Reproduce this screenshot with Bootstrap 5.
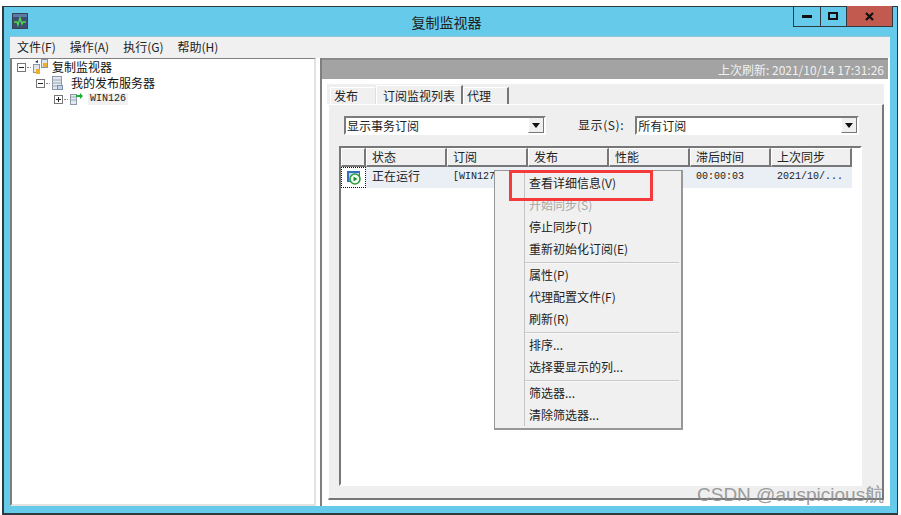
<!DOCTYPE html>
<html lang="zh">
<head>
<meta charset="utf-8">
<title>复制监视器</title>
<link href="https://cdn.jsdelivr.net/npm/bootstrap@5.3.0/dist/css/bootstrap.min.css" rel="stylesheet">
<style>
html,body{margin:0;width:901px;height:515px;overflow:hidden;background:#fff}
body{font-family:"Noto Sans CJK SC","Liberation Sans",sans-serif;font-size:12px;line-height:1;color:#111;padding:6px 0 0 2px}
.rm-win{position:relative;width:896px;height:509px;background:#66cbea;border:1px solid #2f3a40;border-bottom-width:2px;border-left-width:2px}
.rm-title{height:29px;position:relative}
.rm-title-txt{font-size:14px;color:#222;width:100%;text-align:center;padding-top:8px;padding-right:8px}
.rm-appicon{position:absolute;left:8px;top:6px}
.rm-caps{position:absolute;top:-1px;right:4px;height:21px;border:1px solid #2f3a40;border-top:0}
.rm-cap{height:20px;width:27px;border-right:1px solid #2f3a40}
.rm-cap-m{width:26px}
.rm-cap-x{width:45px;background:#c35a50;border-right:0}
.rm-client{width:880px;height:470px;margin-left:6px;border-top:1px solid #98c4d6;background:#fff}
.rm-menu{height:21px;background:#f0f0f0;padding:4px 0 0 7px;gap:14px;font-size:12px;color:#222}
.rm-panes{height:448px}
.rm-tree{width:306px;flex:none;border:1px solid #7f7f7f;border-right-color:#e3e3e3;border-bottom-color:#e3e3e3;border-right-width:2px;border-bottom-width:2px;padding:0 0 0 5px;border-left-width:2px;background:#fff}
.rm-treerow{height:16px;white-space:nowrap;font-size:12px}
.rm-ind1{padding-left:19px}
.rm-ind2{padding-left:37px}
.rm-box{width:9px;height:9px;border:1px solid #777;position:relative;flex:none;background:#fff}
.rm-box::before{content:"";position:absolute;left:1px;right:1px;top:3px;height:1px;background:#222}
.rm-box.rm-plus::after{content:"";position:absolute;top:1px;bottom:1px;left:3px;width:1px;background:#222}
.rm-dots{width:4px;border-top:1px dotted #888;flex:none;margin:0 1px}
.rm-ico{flex:none}
.rm-t-a{margin-left:4px}
.rm-t-b{margin-left:7px}
.rm-mono{font-family:"Liberation Mono","DejaVu Sans Mono",monospace;font-size:10px;color:#222}
.rm-sel{background:#f0f0f0;padding:1px 2px;margin-left:5px}
.rm-split{width:4px;flex:none;background:#fff}
.rm-right{width:570px;flex:none;border-left:2px solid #7f7f7f;background:#fff}
.rm-bar{height:21px;background:#a3a3a3;border-top:2px solid #8a8a8a;color:#f1f1f1;text-align:right;padding:4px 4px 0 0;font-size:12px;margin-right:2px}
.rm-tabs{height:20px;background:#efefef;padding:3px 0 0 3px;margin:5px 0 0 5px;width:557px}
.rm-tab{height:17px;background:#f0f0f0;border-left:1px solid #fff;border-top:1px solid #fff;border-right:2px solid #777;padding:2px 0 0 3px;font-size:12px;color:#222}
.rm-t1{width:46px;border-right:1px solid #ddd}
.rm-t2{width:87px;height:19px;margin-top:-2px;padding:4px 0 0 6px}
.rm-t3{width:46px}
.rm-body{height:396px;background:#efefef;border-top:1px solid #fff;border-left:1px solid #fff;border-right:2px solid #777;border-bottom:2px solid #777;padding:11px 0 0 15px;margin-left:6px;width:556px}
.rm-combos{height:30px}
.rm-combo{height:19px;background:#fff;border:2px solid #7b7b7b;border-right-color:#fff;border-bottom-color:#fff;padding:2px 0 0 1px;position:relative;font-size:12px;color:#222}
.rm-c1{width:202px}
.rm-c2{width:224px;margin-left:11px}
.rm-lbl{margin-left:32px;font-size:12px;letter-spacing:.6px;color:#222;padding-top:3px}
.rm-drop{position:absolute;right:0;top:0;width:16px;height:15px;background:#f0f0f0;border-right:1px solid #777;border-bottom:1px solid #777;border-left:1px solid #fff;display:flex;align-items:center;justify-content:center}
.rm-drop::after{content:"";border-left:4px solid transparent;border-right:4px solid transparent;border-top:5px solid #111}
.rm-list{width:523px;height:340px;background:#fff;border:2px solid #777;border-right-color:#fff;border-bottom-color:#fff;margin-left:-5px;padding:0}
.rm-head{height:19px}
.rm-hc{height:19px;background:#f0f0f0;border:1px solid #fff;border-right:2px solid #777;border-bottom:2px solid #777;width:81px;padding:2px 0 0 5px;font-size:12px;color:#222;flex:none}
.rm-h0{width:25px}
.rm-row{height:21px;width:511px;background:#e9eff4}
.rm-rc{width:81px;flex:none;padding:3px 0 0 6px;font-size:12px;color:#222;white-space:nowrap;overflow:hidden}
.rm-r0{width:25px;background:#fff;padding:0;display:flex;align-items:center;justify-content:center;outline:1px dotted #111;outline-offset:-1px}
.rm-num{font-family:"Liberation Mono",monospace;font-size:10px;color:#222;padding-top:5px}
.rm-ctx{position:absolute;left:490px;top:163px;width:189px;height:260px;background:#f0f0f0;border:2px solid #979797;border-width:1px 2px 2px 1px;padding-top:2px;font-size:12px;color:#222}
.rm-ctx::before{content:"";position:absolute;left:29px;top:2px;bottom:2px;width:1px;background:#c4c4c4}
.rm-mi{height:22px;padding:4px 0 0 34px;white-space:nowrap}
.rm-dis{color:#a6a6a6}
.rm-sp{height:4px;padding-top:1px;margin-left:30px;margin-right:2px}
.rm-sp::after{content:"";display:block;height:2px;background:#c9c9c9;border-bottom:1px solid #f8f8f8}
.rm-red{position:absolute;left:505px;top:163px;width:144px;height:31px;border:3px solid #f43a3a}
.rm-mark{position:absolute;left:693px;top:478px;font-family:"Liberation Sans",sans-serif;font-size:19px;color:#8d8d8d;opacity:.85;white-space:nowrap;line-height:1}
</style>
</head>
<body>
<div class="rm-win">
  <div class="rm-title d-flex">
    <svg class="rm-appicon" width="16" height="16" viewBox="0 0 16 16"><rect x=".5" y=".5" width="15" height="15" fill="#3c4f72" stroke="#3a4252"/><rect x="1" y="1" width="14" height="3" fill="#5a78a8"/><path d="M2 9h3l1 3 2-7 2 6 1-2h3" fill="none" stroke="#4fe04a" stroke-width="1.3"/></svg>
    <div class="rm-title-txt">复制监视器</div>
    <div class="rm-caps d-flex">
      <div class="rm-cap d-flex align-items-center justify-content-center"><svg width="11" height="4"><rect width="10" height="3" y="1" fill="#111"/></svg></div>
      <div class="rm-cap rm-cap-m d-flex align-items-center justify-content-center"><svg width="11" height="9"><rect x="1" y="1" width="8" height="6" fill="none" stroke="#111" stroke-width="2"/></svg></div>
      <div class="rm-cap rm-cap-x d-flex align-items-center justify-content-center"><svg width="10" height="9"><path d="M1 1l7 7M8 1L1 8" stroke="#111" stroke-width="2.2"/></svg></div>
    </div>
  </div>
  <div class="rm-client">
    <div class="rm-menu d-flex"><span>文件(F)</span><span>操作(A)</span><span>执行(G)</span><span>帮助(H)</span></div>
    <div class="rm-panes d-flex">
      <div class="rm-tree">
        <div class="rm-treerow d-flex align-items-center"><span class="rm-box"></span><span class="rm-dots"></span>
          <svg width="16" height="16" viewBox="0 0 16 16" class="rm-ico"><rect x="9.5" y=".5" width="6" height="8" fill="#dfe6ef" stroke="#8a96a6"/><rect x="11" y="4" width="4" height="4" fill="#eeb02a"/><rect x="1.5" y="5.5" width="6" height="8" fill="#dfe6ef" stroke="#8a96a6"/><rect x="4" y="10" width="4" height="5" fill="#eeb02a"/><path d="M3 3l3-2v3z" fill="#223a80"/></svg>
          <span class="rm-t-a">复制监视器</span></div>
        <div class="rm-treerow rm-ind1 d-flex align-items-center"><span class="rm-box"></span><span class="rm-dots"></span>
          <svg width="13" height="15" viewBox="0 0 13 15" class="rm-ico"><rect x="1.5" y=".5" width="9" height="13" fill="#e2e8ee" stroke="#8b98a6"/><path d="M2 4h8M2 7h8M2 10h8" stroke="#9aa8b6"/><rect x="6.5" y="9.5" width="5" height="4" fill="#bfd4e8" stroke="#7f93a8"/></svg>
          <span class="rm-t-b">我的发布服务器</span></div>
        <div class="rm-treerow rm-ind2 d-flex align-items-center"><span class="rm-box rm-plus"></span><span class="rm-dots"></span>
          <svg width="14" height="14" viewBox="0 0 14 14" class="rm-ico"><rect x="1.5" y="2.5" width="6" height="10" fill="#e2e8ee" stroke="#8b98a6"/><path d="M2 5h5M2 8h5" stroke="#9aa8b6"/><path d="M7 3h4V1l3 3-3 3V5H7z" fill="#18b030"/></svg>
          <span class="rm-mono rm-sel">WIN126</span></div>
      </div>
      <div class="rm-split"></div>
      <div class="rm-right">
        <div class="rm-bar">上次刷新: 2021/10/14 17:31:26</div>
        <div class="rm-tabs d-flex align-items-start">
          <div class="rm-tab rm-t1">发布</div>
          <div class="rm-tab rm-t2">订阅监视列表</div>
          <div class="rm-tab rm-t3">代理</div>
        </div>
        <div class="rm-body">
          <div class="rm-combos d-flex align-items-start">
            <div class="rm-combo rm-c1">显示事务订阅<span class="rm-drop"></span></div>
            <span class="rm-lbl">显示(S):</span>
            <div class="rm-combo rm-c2">所有订阅<span class="rm-drop"></span></div>
          </div>
          <div class="rm-list">
            <div class="rm-head d-flex">
              <div class="rm-hc rm-h0"></div><div class="rm-hc">状态</div><div class="rm-hc">订阅</div><div class="rm-hc">发布</div><div class="rm-hc">性能</div><div class="rm-hc">滞后时间</div><div class="rm-hc">上次同步</div>
            </div>
            <div class="rm-row d-flex">
              <div class="rm-rc rm-r0"><svg width="16" height="15" viewBox="0 0 16 15"><rect x="1" y="1" width="13" height="11" fill="#2f6fc4"/><rect x="3" y="3" width="10" height="8" fill="#c4d8ec"/><circle cx="9" cy="9" r="5" fill="#f4fff4" stroke="#2e9a3c" stroke-width="1.6"/><path d="M7.5 6.5l4 2.5-4 2.5z" fill="#1f8a30"/></svg></div>
              <div class="rm-rc">正在运行</div>
              <div class="rm-rc rm-num">[WIN127</div>
              <div class="rm-rc"></div><div class="rm-rc"></div>
              <div class="rm-rc rm-num">00:00:03</div>
              <div class="rm-rc rm-num">2021/10/...</div>
            </div>
          </div>
        </div>
      </div>
    </div>
  </div>
  <div class="rm-ctx">
    <div class="rm-mi">查看详细信息(V)</div>
    <div class="rm-mi rm-dis">开始同步(S)</div>
    <div class="rm-mi">停止同步(T)</div>
    <div class="rm-mi">重新初始化订阅(E)</div>
    <div class="rm-sp"></div>
    <div class="rm-mi">属性(P)</div>
    <div class="rm-mi">代理配置文件(F)</div>
    <div class="rm-mi">刷新(R)</div>
    <div class="rm-sp"></div>
    <div class="rm-mi">排序...</div>
    <div class="rm-mi">选择要显示的列...</div>
    <div class="rm-sp"></div>
    <div class="rm-mi">筛选器...</div>
    <div class="rm-mi">清除筛选器...</div>
  </div>
  <div class="rm-red"></div>
  <div class="rm-mark">CSDN @auspicious航</div>
</div>
<script src="https://cdn.jsdelivr.net/npm/bootstrap@5.3.0/dist/js/bootstrap.bundle.min.js"></script>
</body>
</html>
